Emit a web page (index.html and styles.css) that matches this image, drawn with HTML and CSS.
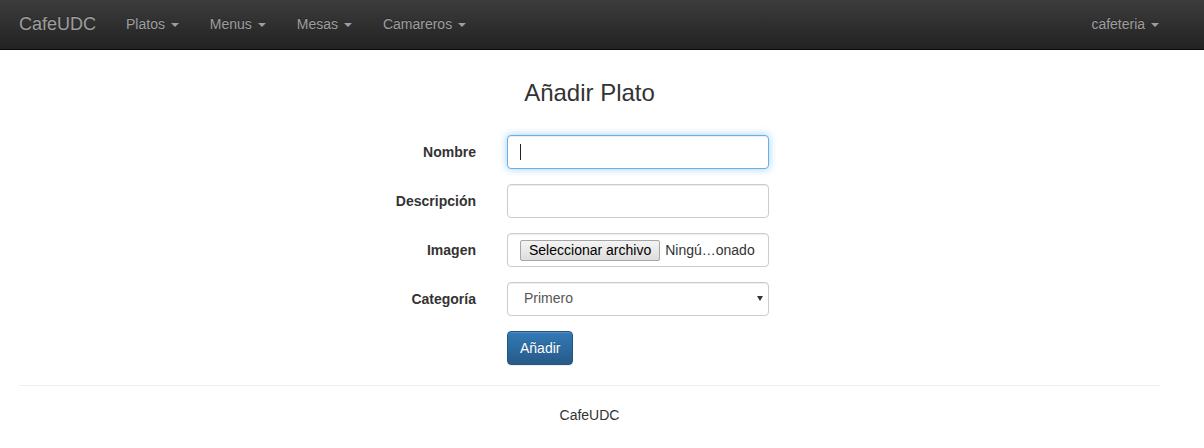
FILE: index.html
```html
<!DOCTYPE html>
<html lang="es">
<head>
<meta charset="utf-8">
<title>Añadir Plato</title>
<link rel="stylesheet" href="styles.css">
</head>
<body>
<nav class="navbar">
  <div class="navbar-inner">
    <a class="brand" href="#">CafeUDC</a>
    <ul class="nav">
      <li><a href="#">Platos <span class="caret"></span></a></li>
      <li><a href="#">Menus <span class="caret"></span></a></li>
      <li><a href="#">Mesas <span class="caret"></span></a></li>
      <li><a href="#">Camareros <span class="caret"></span></a></li>
    </ul>
    <ul class="nav nav-right">
      <li><a href="#">cafeteria <span class="caret"></span></a></li>
    </ul>
  </div>
</nav>

<main class="container">
  <h3 class="title">Añadir Plato</h3>
  <form class="form">
    <div class="form-group">
      <label class="form-label" for="nombre">Nombre</label>
      <div class="field">
        <input class="form-control is-focused" id="nombre" type="text">
        <span class="text-caret"></span>
      </div>
    </div>
    <div class="form-group">
      <label class="form-label" for="desc">Descripción</label>
      <div class="field">
        <input class="form-control" id="desc" type="text">
      </div>
    </div>
    <div class="form-group">
      <label class="form-label">Imagen</label>
      <div class="field">
        <div class="form-control file-control">
          <span class="file-btn">Seleccionar archivo</span>
          <span class="file-name">Ningú…onado</span>
        </div>
      </div>
    </div>
    <div class="form-group">
      <label class="form-label" for="cat">Categoría</label>
      <div class="field">
        <select class="form-control select-control" id="cat">
          <option>Primero</option>
          <option>Segundo</option>
          <option>Postre</option>
        </select>
        <span class="select-arrow"></span>
      </div>
    </div>
    <div class="form-group">
      <span class="form-label"></span>
      <div class="field">
        <button type="button" class="btn-primary">Añadir</button>
      </div>
    </div>
  </form>
  <hr class="divider">
  <footer class="footer">CafeUDC</footer>
</main>
</body>
</html>
```

FILE: styles.css
```css
* { box-sizing: border-box; }

html, body { margin: 0; padding: 0; }

body {
  font-family: "Liberation Sans", Arial, Helvetica, sans-serif;
  font-size: 14px;
  line-height: 1.42857;
  color: #333;
  background: #fff;
}

/* Navbar */
.navbar {
  height: 50px;
  background: linear-gradient(to bottom, #3c3c3c 0%, #222 100%);
  border-bottom: 1px solid #080808;
}
.navbar-inner {
  display: flex;
  align-items: stretch;
  height: 49px;
  padding: 0 29px 0 4px;
}
.brand {
  display: block;
  padding: 14px 15px 15px;
  font-size: 18px;
  line-height: 20px;
  color: #9d9d9d;
  text-decoration: none;
  text-shadow: 0 -1px 0 rgba(0,0,0,.25);
}
.nav {
  display: flex;
  list-style: none;
  margin: 0;
  padding: 0;
}
.nav-right { margin-left: auto; }
.nav a {
  display: block;
  padding: 14px 15px 15px;
  line-height: 20px;
  color: #9d9d9d;
  text-decoration: none;
  text-shadow: 0 -1px 0 rgba(0,0,0,.25);
}
.nav li + li a { padding-left: 16px; }
.nav-right a { padding-right: 16px; }
.caret {
  display: inline-block;
  width: 0;
  height: 0;
  margin-left: 2px;
  vertical-align: middle;
  border-top: 4px solid #9d9d9d;
  border-left: 4px solid transparent;
  border-right: 4px solid transparent;
}

/* Content */
.container {
  width: 1141px;
  margin-left: 19px;
}
.title {
  margin: 30px 0 29px;
  font-size: 24px;
  font-weight: 500;
  line-height: 1.1;
  text-align: center;
  color: #333;
}
.form { display: flex; flex-direction: column; }
.form-group {
  display: flex;
  margin-bottom: 15px;
}
.form-label {
  width: 457px;
  padding-top: 8px;
  text-align: right;
  font-weight: bold;
  color: #333;
}
.field {
  position: relative;
  width: 262px;
  margin-left: 31px;
}
.form-control {
  display: block;
  width: 100%;
  height: 34px;
  padding: 6px 12px;
  font-family: inherit;
  font-size: 14px;
  line-height: 1.42857;
  color: #555;
  background: #fff;
  border: 1px solid #ccc;
  border-radius: 4px;
  box-shadow: inset 0 1px 1px rgba(0,0,0,.075);
  outline: none;
}
.form-control.is-focused {
  border-color: #66afe9;
  box-shadow: inset 0 1px 1px rgba(0,0,0,.075), 0 0 8px rgba(102,175,233,.6);
}
.text-caret {
  position: absolute;
  left: 13px;
  top: 9px;
  width: 1px;
  height: 16px;
  background: #222;
}
.file-control {
  display: flex;
  align-items: center;
  padding: 1px 12px 0;
  color: #333;
  font-size: 14px;
}
.file-btn {
  display: inline-block;
  height: 21px;
  padding: 0 8px;
  line-height: 19px;
  color: #000;
  background: linear-gradient(to bottom, #f4f4f4, #dddddd);
  border: 1px solid #a6a6a6;
  border-radius: 2px;
  white-space: nowrap;
}
.file-name {
  margin-left: 5px;
  white-space: nowrap;
  color: #333;
}
.select-control {
  -webkit-appearance: none;
  appearance: none;
  padding-left: 16px;
}
.select-arrow {
  position: absolute;
  right: 6px;
  top: 14px;
  width: 0;
  height: 0;
  border-top: 5px solid #333;
  border-left: 3px solid transparent;
  border-right: 3px solid transparent;
}
.btn-primary {
  display: inline-block;
  height: 34px;
  padding: 6px 12px;
  font-family: inherit;
  font-size: 14px;
  line-height: 20px;
  color: #fff;
  text-shadow: 0 -1px 0 rgba(0,0,0,.2);
  background: linear-gradient(to bottom, #337ab7 0%, #265a88 100%);
  border: 1px solid #245580;
  border-radius: 4px;
  box-shadow: inset 0 1px 0 rgba(255,255,255,.15), 0 1px 1px rgba(0,0,0,.075);
  cursor: pointer;
}
.divider {
  margin: 5px 0 19px;
  border: 0;
  border-top: 1px solid #eee;
}
.footer {
  text-align: center;
  line-height: 20px;
  color: #333;
}
```
